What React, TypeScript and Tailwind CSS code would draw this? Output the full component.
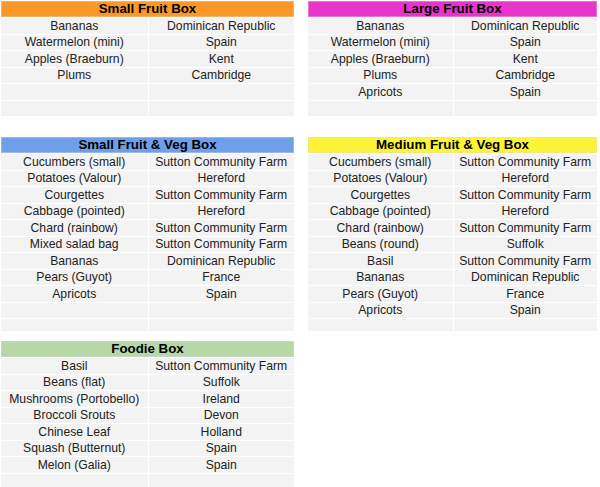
import React from 'react';

type Row = [string, string];

type Box = { title: string; color: string; rows: Row[]; empty: number };

const SUTTON = 'Sutton Community Farm';

const smallFruit: Box = {
  title: 'Small Fruit Box',
  color: 'bg-[#fb9828]',
  rows: [
    ['Bananas', 'Dominican Republic'],
    ['Watermelon (mini)', 'Spain'],
    ['Apples (Braeburn)', 'Kent'],
    ['Plums', 'Cambridge'],
  ],
  empty: 2,
};

const largeFruit: Box = {
  title: 'Large Fruit Box',
  color: 'bg-[#e834ca]',
  rows: [
    ['Bananas', 'Dominican Republic'],
    ['Watermelon (mini)', 'Spain'],
    ['Apples (Braeburn)', 'Kent'],
    ['Plums', 'Cambridge'],
    ['Apricots', 'Spain'],
  ],
  empty: 1,
};

const smallVeg: Box = {
  title: 'Small Fruit & Veg Box',
  color: 'bg-[#6f9feb]',
  rows: [
    ['Cucumbers (small)', SUTTON],
    ['Potatoes (Valour)', 'Hereford'],
    ['Courgettes', SUTTON],
    ['Cabbage (pointed)', 'Hereford'],
    ['Chard (rainbow)', SUTTON],
    ['Mixed salad bag', SUTTON],
    ['Bananas', 'Dominican Republic'],
    ['Pears (Guyot)', 'France'],
    ['Apricots', 'Spain'],
  ],
  empty: 2,
};

const mediumVeg: Box = {
  title: 'Medium Fruit & Veg Box',
  color: 'bg-[#fdf43a]',
  rows: [
    ['Cucumbers (small)', SUTTON],
    ['Potatoes (Valour)', 'Hereford'],
    ['Courgettes', SUTTON],
    ['Cabbage (pointed)', 'Hereford'],
    ['Chard (rainbow)', SUTTON],
    ['Beans (round)', 'Suffolk'],
    ['Basil', SUTTON],
    ['Bananas', 'Dominican Republic'],
    ['Pears (Guyot)', 'France'],
    ['Apricots', 'Spain'],
  ],
  empty: 1,
};

const foodie: Box = {
  title: 'Foodie Box',
  color: 'bg-[#b7d7a9]',
  rows: [
    ['Basil', SUTTON],
    ['Beans (flat)', 'Suffolk'],
    ['Mushrooms (Portobello)', 'Ireland'],
    ['Broccoli Srouts', 'Devon'],
    ['Chinese Leaf', 'Holland'],
    ['Squash (Butternut)', 'Spain'],
    ['Melon (Galia)', 'Spain'],
  ],
  empty: 1,
};

function BoxTable({ box }: { box: Box }) {
  const rows: Row[] = [...box.rows, ...Array.from({ length: box.empty }, () => ['', ''] as Row)];
  return (
    <div className="w-full">
      <div
        className={`h-[16px] flex items-center justify-center font-bold text-[13.3px] text-black ${box.color} border border-[#d9d9d9]/40`}
      >
        {box.title}
      </div>
      {rows.map((r, i) => (
        <div key={i} className="grid grid-cols-2 h-[16.5px] border-t border-white bg-[#f3f3f3] text-[12.2px] text-[#222]">
          <div className="flex items-center justify-center whitespace-nowrap overflow-hidden">{r[0]}</div>
          <div className="flex items-center justify-center whitespace-nowrap overflow-hidden border-l border-white">
            {r[1]}
          </div>
        </div>
      ))}
    </div>
  );
}

export default function App() {
  return (
    <div
      className="w-[600px] h-[487px] overflow-hidden bg-white pl-[1px] pt-[1px] leading-none"
      style={{ fontFamily: '"Liberation Sans", Arial, sans-serif' }}
    >
      <div className="grid grid-cols-[293px_289px] gap-x-[14px]">
        <BoxTable box={smallFruit} />
        <BoxTable box={largeFruit} />
      </div>
      <div className="grid grid-cols-[293px_289px] gap-x-[14px] mt-[21px] h-[194px] overflow-hidden">
        <BoxTable box={smallVeg} />
        <BoxTable box={mediumVeg} />
      </div>
      <div className="grid grid-cols-[293px_289px] gap-x-[14px] mt-[10px]">
        <BoxTable box={foodie} />
        <div />
      </div>
    </div>
  );
}
